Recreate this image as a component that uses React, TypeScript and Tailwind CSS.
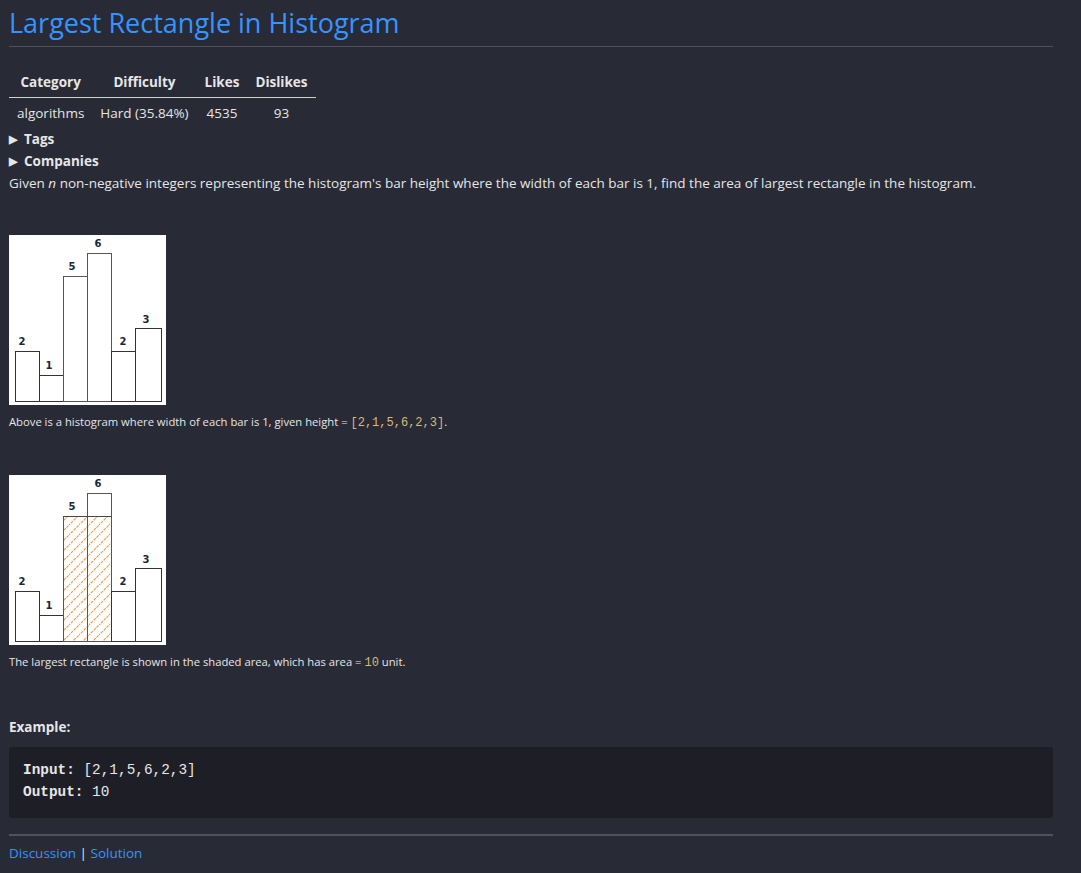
import React from "react";

const bars = [
  { x: 6.5, w: 24, top: 116.5 },
  { x: 30.5, w: 24, top: 140.5 },
  { x: 54.5, w: 24, top: 41.5 },
  { x: 78.5, w: 24, top: 18.5 },
  { x: 102.5, w: 24, top: 116.5 },
  { x: 126.5, w: 26, top: 93.5 },
];

const labels = [
  { x: 13, y: 106, t: "2" },
  { x: 40, y: 130, t: "1" },
  { x: 63, y: 31, t: "5" },
  { x: 89, y: 8, t: "6" },
  { x: 114, y: 106, t: "2" },
  { x: 137, y: 84, t: "3" },
];

function Histogram({ shaded, id }: { shaded?: boolean; id: string }) {
  const bottom = 166.5;
  return (
    <svg width="157" height="170" viewBox="0 0 157 170" className="block bg-white">
      <defs>
        <pattern id={id} patternUnits="userSpaceOnUse" width="10" height="10">
          <path d="M-1 11 L11 -1" stroke="#f7963f" strokeWidth="1.1" strokeDasharray="3 1" />
        </pattern>
      </defs>
      {shaded && <rect x={54.5} y={41.5} width={48} height={bottom - 41.5} fill={`url(#${id})`} />}
      {bars.map((b, i) => (
        <rect
          key={i}
          x={b.x}
          y={b.top}
          width={b.w}
          height={bottom - b.top}
          fill="none"
          stroke={i === 2 || i === 3 ? "#555" : "#333"}
          strokeWidth="1"
        />
      ))}
      {shaded && <line x1={54.5} y1={41.5} x2={102.5} y2={41.5} stroke="#444" strokeWidth="1" />}
      {labels.map((l, i) => (
        <text
          key={i}
          x={l.x}
          y={l.y}
          textAnchor="middle"
          dominantBaseline="central"
          fontSize="10"
          fontWeight="600"
          fill="#1c2637"
          fontFamily="DejaVu Sans, sans-serif"
        >
          {l.t}
        </text>
      ))}
    </svg>
  );
}

export default function App() {
  return (
    <div className="min-h-screen bg-[#282a36] pl-[9px] pr-[28px] text-[14px] leading-[22px] text-[#e6e6e6] font-['Open_Sans',sans-serif]">
      <h1 className="pt-[7px] pb-[8px] text-[27px] leading-[31px] font-normal text-[#3794ff] border-b border-[#4e505c]">
        Largest Rectangle in Histogram
      </h1>

      <table className="mt-[20px] border-collapse text-[13.5px]">
        <thead>
          <tr className="border-b border-[#cfcfcf]">
            <th className="px-[10px] pt-[4px] pb-[4px] font-bold text-center">Category</th>
            <th className="px-[10px] pt-[4px] pb-[4px] font-bold text-center">Difficulty</th>
            <th className="px-[8px] pt-[4px] pb-[4px] font-bold text-center">Likes</th>
            <th className="px-[8px] pt-[4px] pb-[4px] font-bold text-center">Dislikes</th>
          </tr>
        </thead>
        <tbody>
          <tr>
            <td className="px-[8px] py-[4px] text-center">algorithms</td>
            <td className="px-[8px] py-[4px] text-center">Hard (35.84%)</td>
            <td className="px-[8px] py-[4px] text-center">4535</td>
            <td className="px-[8px] py-[4px] text-center">93</td>
          </tr>
        </tbody>
      </table>

      <div className="flex items-center font-bold text-[13.5px]">
        <span className="text-[11px] w-[15px]">▶</span>
        <span>Tags</span>
      </div>
      <div className="flex items-center font-bold text-[13.5px]">
        <span className="text-[11px] w-[15px]">▶</span>
        <span>Companies</span>
      </div>
      <p className="text-[13.5px]">
        Given <em>n</em> non-negative integers representing the histogram's bar height where the width of each bar
        is 1, find the area of largest rectangle in the histogram.
      </p>

      <div className="mt-[41px]">
        <Histogram id="hatchA" />
      </div>
      <p className="mt-[6px] h-[22px] text-[11.25px]">
        Above is a histogram where width of each bar is 1, given height ={" "}
        <code className="font-['Liberation_Mono',monospace] text-[12px] text-[#d7ba7d]">[2,1,5,6,2,3]</code>.
      </p>

      <div className="mt-[42px]">
        <Histogram id="hatchB" shaded />
      </div>
      <p className="mt-[6px] h-[22px] text-[11.25px]">
        The largest rectangle is shown in the shaded area, which has area ={" "}
        <code className="font-['Liberation_Mono',monospace] text-[12px] text-[#d7ba7d]">10</code> unit.
      </p>

      <p className="mt-[43px] font-bold text-[13.5px]">Example:</p>

      <pre className="mt-[9px] rounded-[3px] bg-[#1e1f26] pl-[14px] pt-[12px] pb-[15px] font-['Liberation_Mono',monospace] text-[14.4px] leading-[22px] text-[#e6e6e6]">
        <strong>Input:</strong> [2,1,5,6,2,3]{"\n"}
        <strong>Output:</strong> 10
      </pre>

      <div className="mt-[16px] h-[2px] bg-[#50525d]" />

      <p className="mt-[6px] text-[13.5px]">
        <a className="text-[#3794ff]">Discussion</a> | <a className="text-[#3794ff]">Solution</a>
      </p>
    </div>
  );
}
